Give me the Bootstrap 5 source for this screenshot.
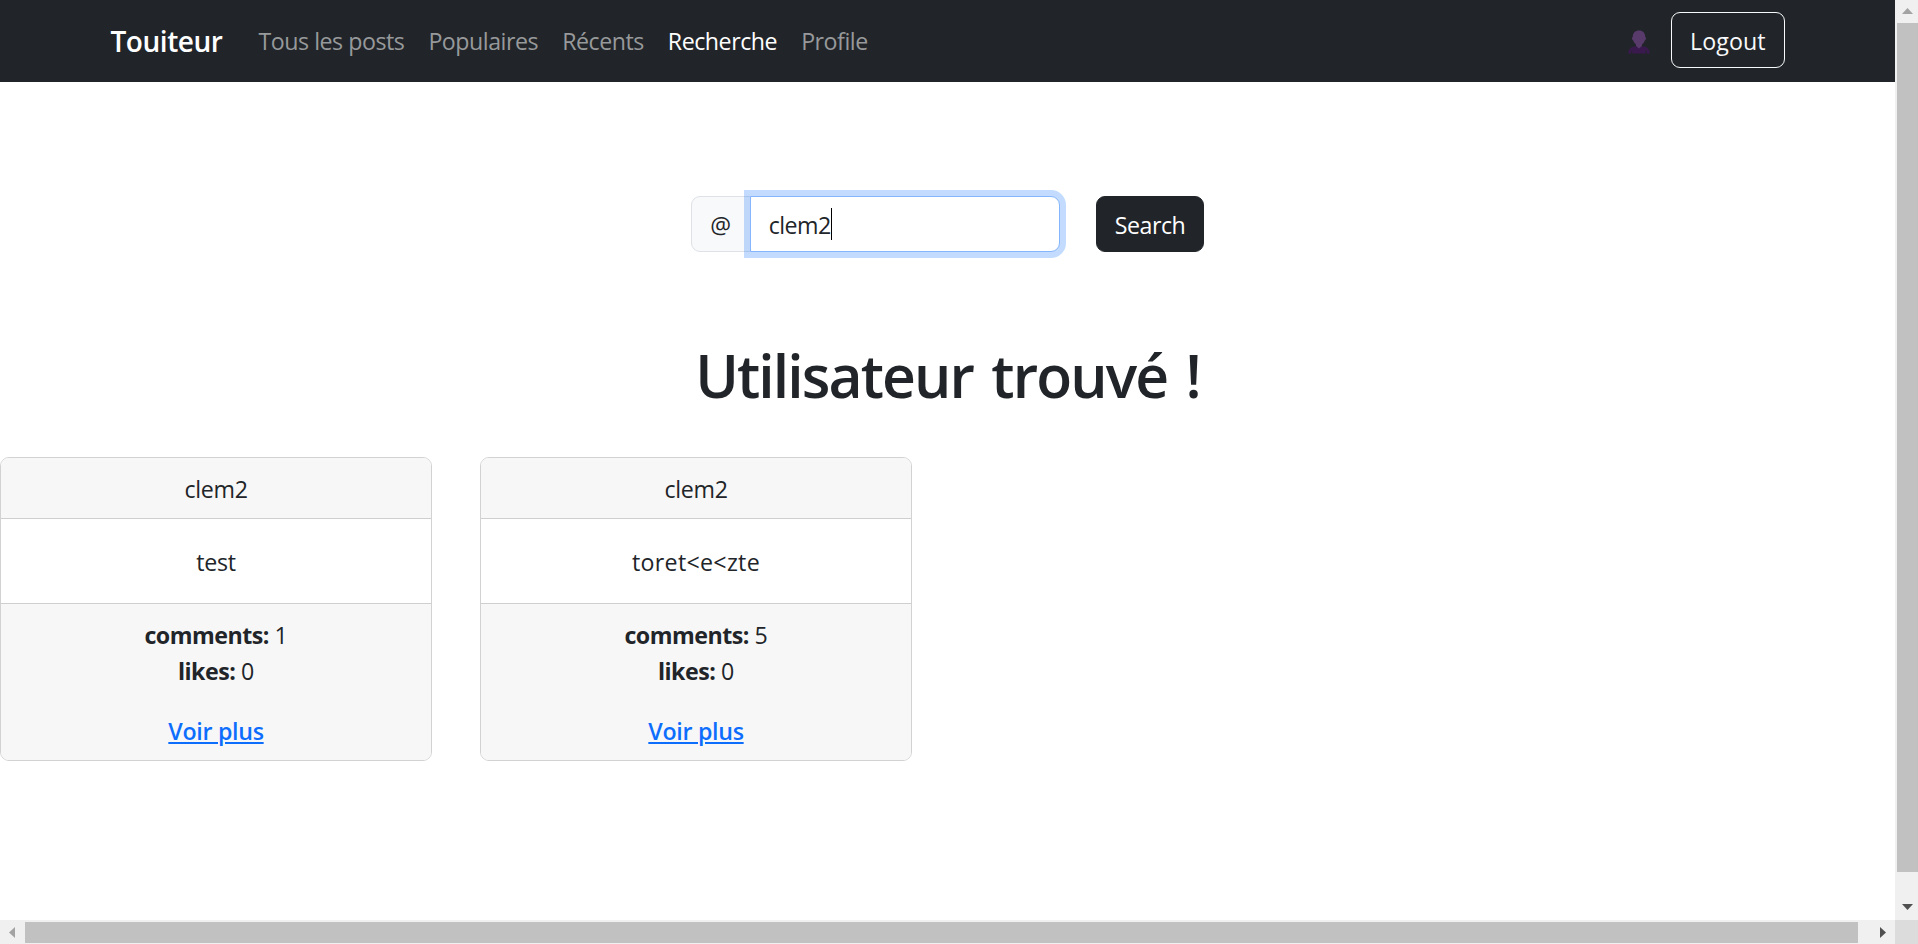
<!DOCTYPE html>
<html lang="fr">
<head>
<meta charset="utf-8">
<meta name="viewport" content="width=device-width, initial-scale=1">
<title>Touiteur</title>
<link href="https://cdn.jsdelivr.net/npm/bootstrap@5.3.0/dist/css/bootstrap.min.css" rel="stylesheet">
<style>
  html { font-size: 24px; }
  body {
    font-family: "Open Sans", "Noto Sans", sans-serif;
    font-size: 23.2px; line-height: 36px; color: #212529; background: #fff;
    display: grid; grid-template: minmax(0, 1fr) 24px / minmax(0, 1fr) 23px;
  }
  .page { overflow: hidden; }
  .topbar { height: 82px; background: #212529; padding: 0; }
  .topbar .container { max-width: 1710px; padding: 0 18px; }
  .topbar .navbar-brand { font-size: 28px; font-weight: 600; letter-spacing: -.45px; color: #fff; margin-right: 24px; padding: 0; line-height: 45px; }
  .topbar .nav-link { color: #97999b; padding: 0 12px; letter-spacing: -.47px; }
  .topbar .nav-link.active { color: #fff; }
  .btn { font-size: 23.2px; line-height: 36px; padding: 10px 18px 8px; border-width: 1px; border-radius: 9px; letter-spacing: -.45px; }
  .topbar .btn { letter-spacing: .05px; margin-bottom: 2px; }
  .avatar { width: 22px; height: 24px; margin-right: 21px; margin-top: 2px; }
  .search { padding-top: 114px; gap: 36px; }
  .search .input-group { width: 369px; height: 56px; }
  .search .input-group-text { width: 60px; padding: 2px 0 0; justify-content: center; font-size: 23.2px; background: #f8f9fa; border-color: #dee2e6; border-radius: 9px; color: #212529; }
  .search .form-control { font-size: 23.2px; line-height: 36px; padding: 10px 18px 8px; border-radius: 9px; background: #fff; color: #212529; letter-spacing: -.5px; }
  .search .form-control.focused { border-color: #86b7fe; box-shadow: 0 0 0 6px rgba(13, 110, 253, .25); z-index: 5; }
  .caret { display: inline-block; width: 1px; height: 32px; background: #000; vertical-align: middle; margin-top: -8px; }
  .found { font-size: 58.8px; line-height: 72px; font-weight: 600; margin: 87px 0 0; letter-spacing: -1.9px; word-spacing: 5px; }
  .posts { gap: 48px; margin-top: 46px; letter-spacing: -.3px; }
  .posts .card { width: 432px; border: 1px solid #d2d2d2; border-radius: 9px; }
  .posts .card-header { padding: 13px 24px 11px; background: #f7f7f7; border-bottom: 1px solid #cfcfcf; }
  .posts .card-body { padding: 25px 24px 23px; }
  .posts .card-footer { padding: 13px 24px 11px; background: #f7f7f7; border-top: 1px solid #cfcfcf; }
  .posts b { letter-spacing: -.5px; }
  .posts a { color: #0d6efd; font-weight: 600; letter-spacing: -.3px; }
  .wide { letter-spacing: .3px; }
  .sb { background: #f0f0f0; }
  .sb svg { display: block; flex: none; }
  .thumb { background: #c1c1c1; }
  .sb-y { padding-left: 2px; }
  .sb-y .thumb { height: 849px; }
  .sb-x .thumb { width: 1833px; height: 21px; margin-top: 2px; }
  .corner { background: #dcdcdc; }
</style>
</head>
<body class="vh-100 overflow-hidden">
<div class="page">
  <nav class="navbar navbar-expand topbar">
    <div class="container">
      <a class="navbar-brand" href="#">Touiteur</a>
      <div class="navbar-nav me-auto">
        <a class="nav-link" href="#">Tous les posts</a>
        <a class="nav-link" href="#">Populaires</a>
        <a class="nav-link" href="#">Récents</a>
        <a class="nav-link active" href="#">Recherche</a>
        <a class="nav-link" href="#">Profile</a>
      </div>
      <svg class="avatar" viewBox="0 0 22 24">
        <path fill="#3a1a4e" d="M0 23.500C.5 20 2 17.500 5.500 16.500h11c3.500 1 5 3.500 5.500 7z"/>
        <path fill="#212529" d="M3.300 20.500h1v3h-1zM17.700 20.500h1v3h-1z"/>
        <path fill="#583a6b" d="M11 .5C7 .5 4.800 3 4.800 7c-1.300.3-1 3 .4 3.500C5.800 12.500 7 13.700 8 14.500V16l3 2.500 3-2.500v-1.500c1-.8 2.200-2 2.800-4 1.400-.5 1.700-3.200.4-3.500 0-4-2.200-6.500-6.200-6.500z"/>
      </svg>
      <button class="btn btn-outline-light" type="button">Logout</button>
    </div>
  </nav>

  <form class="search d-flex justify-content-center">
    <div class="input-group flex-nowrap">
      <span class="input-group-text">@</span>
      <div class="form-control focused" role="textbox">clem2<span class="caret"></span></div>
    </div>
    <button class="btn btn-dark" type="button">Search</button>
  </form>

  <h1 class="found text-center">Utilisateur trouvé !</h1>

  <div class="posts d-flex text-center">
    <div class="card">
      <div class="card-header">clem2</div>
      <div class="card-body">test</div>
      <div class="card-footer">
        <div><b>comments:</b> 1</div>
        <div class="mb-3"><b>likes:</b> 0</div>
        <a class="d-block" href="#">Voir plus</a>
      </div>
    </div>
    <div class="card">
      <div class="card-header">clem2</div>
      <div class="card-body wide">toret&lt;e&lt;zte</div>
      <div class="card-footer">
        <div><b>comments:</b> 5</div>
        <div class="mb-3"><b>likes:</b> 0</div>
        <a class="d-block" href="#">Voir plus</a>
      </div>
    </div>
  </div>
</div>

<div class="sb sb-y d-flex flex-column">
  <svg width="21" height="23"><path fill="#a3a3a3" d="M5 14 10.500 8 16 14z"/></svg>
  <div class="thumb"></div>
  <svg class="mt-auto" width="21" height="24"><path fill="#505050" d="M5 8h11l-5.500 6z"/></svg>
</div>
<div class="sb sb-x d-flex">
  <svg width="25" height="24"><path fill="#a3a3a3" d="M15 7v11l-6-5.500z"/></svg>
  <div class="thumb"></div>
  <svg class="ms-auto" width="25" height="24"><path fill="#505050" d="M10 7v11l6-5.500z"/></svg>
</div>
<div class="corner"></div>
<script src="https://cdn.jsdelivr.net/npm/bootstrap@5.3.0/dist/js/bootstrap.bundle.min.js"></script>
</body>
</html>
